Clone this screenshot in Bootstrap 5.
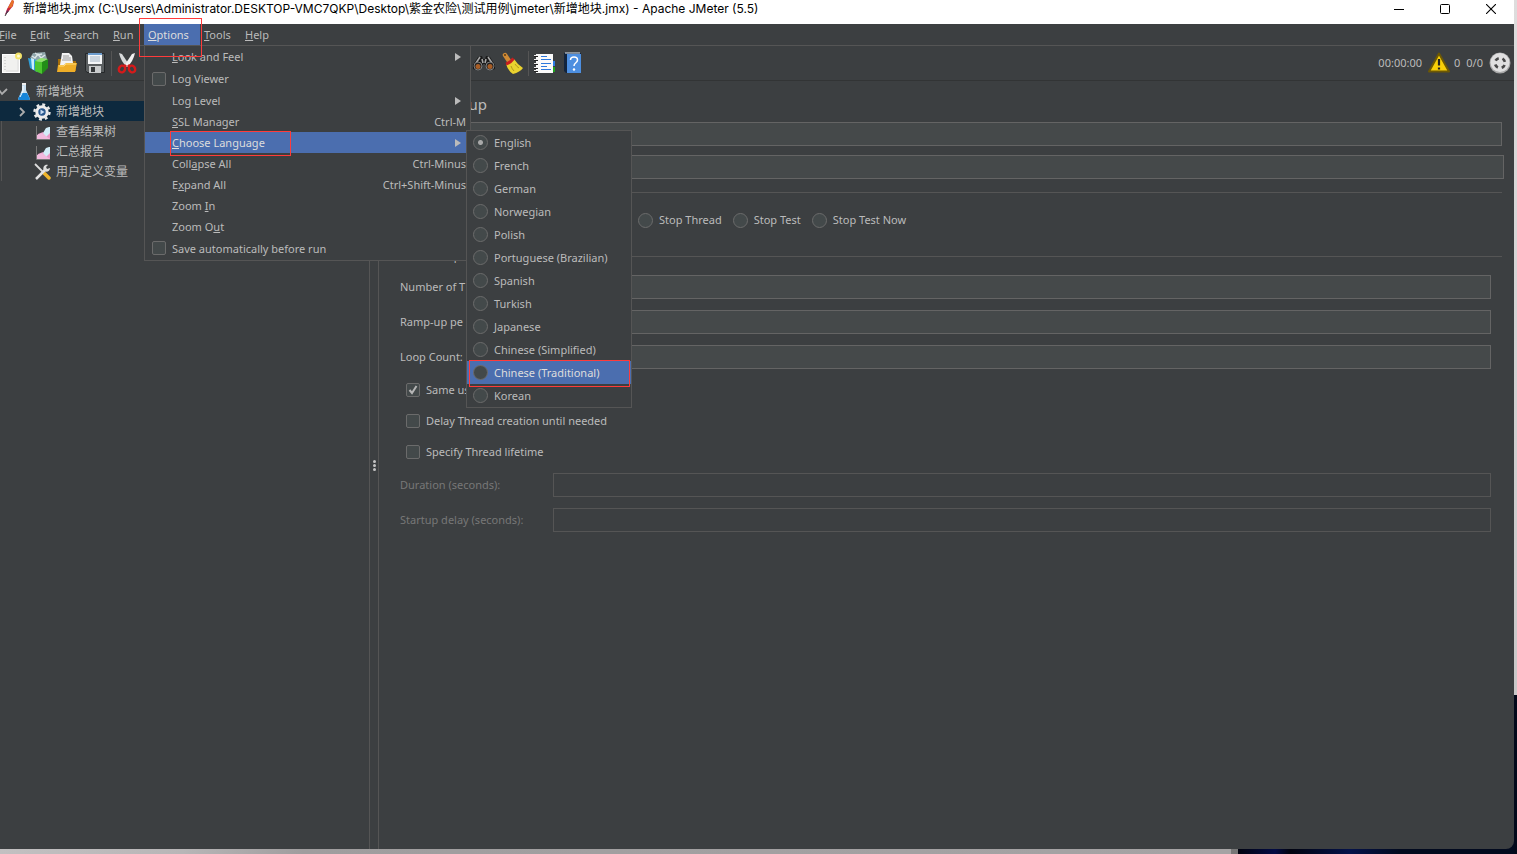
<!DOCTYPE html>
<html lang="en">
<head>
<meta charset="utf-8">
<meta name="viewport" content="width=device-width, initial-scale=1">
<title>Apache JMeter (5.5)</title>
<link href="https://cdn.jsdelivr.net/npm/bootstrap@5.3.0/dist/css/bootstrap.min.css" rel="stylesheet">
<style>
  :root { --ink:#bbbbbb; --panel:#3c3f41; --field:#45494a; --edge:#646464; --rule:#555555; --pick:#4b6eaf; --mark:#ff3b3b; }
  body { font-family:"Noto Sans","Noto Sans CJK SC",sans-serif; font-size:11px; line-height:20px; color:var(--ink);
    background:linear-gradient(90deg,#c2c0c1 0,#b8b6b7 12%,#9f9d9e 20%,#a5a3a4 80%,#a5a3a4 1231px,#777 1231px,#777 1238px,#01030f 1238px,#020b45 1275px,#01030f 1290px,#04124a 1350px,#020a1e 1400px); }
  .desk { min-height:100vh; padding:0 3px 5px 0; background:linear-gradient(180deg,#dedddd 0,#c9c8c8 695px,#02091a 695px) right top/3px 100% no-repeat; }
  .win { min-height:calc(100vh - 5px); background:var(--panel); border-bottom-right-radius:8px; }
  button { font:inherit; color:inherit; background:none; border:0; padding:0; }
  .titlebar { height:24px; background:#fff; color:#000; font-size:12px; }
  .title-text { margin-left:5px; line-height:18px; height:24px; font-family:Inter,"Noto Sans CJK SC",sans-serif; }
  .win-btn { width:46px; height:17px; }
  .menubar { height:22px; border-bottom:1px solid var(--rule); margin-left:-5px; }
  .menu-top { height:21px; padding-left:4px; text-align:left; white-space:nowrap; }
  .w-file { width:31px; } .w-edit { width:34px; } .w-search { width:49px; } .w-run { width:35px; } .w-options { width:56px; } .w-tools { width:41px; }
  .chosen { background:var(--pick) !important; color:#ddd; }
  .outlined { position:absolute; border:1px solid var(--mark); pointer-events:none; z-index:30; }
  .o-options { left:-5px; top:-6px; width:63px; height:39px; }
  .o-language { left:25px; top:-1px; width:121px; height:25px; }
  .o-chinese { left:2px; top:-1px; width:161px; height:27px; }
  .menu-pop { position:absolute; background:var(--panel); border:1px solid var(--rule); z-index:10; color:var(--ink); }
  .pop-options { left:0; top:21px; width:327px; border-top:0; margin-top:1px; }
  .pop-lang { left:321px; top:-2px; width:166px; z-index:20; }
  .item { position:relative; height:21px; padding:1px 4px 0 27px; width:100%; text-align:left; }
  .item.tall { height:22px; padding-top:0; } .item.last { height:23px; }
  .item .form-tick { position:absolute; left:7px; top:4px; }
  .arrow { width:0; height:0; border:4px solid transparent; border-left:6px solid var(--ink); border-right:0; margin-right:5px; }
  .lang { position:relative; height:23px; padding-left:6px; gap:6px; }
  .form-tick, .form-dot { appearance:none; flex:none; margin:0; width:14px; height:14px; border:1px solid #6b6b6b; border-radius:2px; background:#43494a; }
  .form-dot { width:15px; height:15px; border-radius:50%; }
  .form-dot:checked { background:radial-gradient(circle,#a9a9a9 0 2px,#43494a 3px); }
  .form-tick:checked { background:#43494a url("data:image/svg+xml,%3Csvg xmlns='http://www.w3.org/2000/svg' viewBox='0 0 12 12'%3E%3Cpath d='M2.5 6l2.5 3 4.500-7' fill='none' stroke='%23b5b5b5' stroke-width='2'/%3E%3C/svg%3E") center/12px no-repeat; }
  .toolbar { height:35px; border-bottom:1px solid #323435; margin-left:-3px; }
  .tool { width:28px; height:34px; }
  .toolbar svg, .tree svg { display:block; flex:none; }
  .tool svg { margin:auto; }
  .sep { width:1px; height:25px; background:var(--rule); margin:0 1px 0 2px; }
  .tools-late { margin-left:329px; }
  .status { gap:6px; padding-right:3px; }
  .status .alerts { gap:4px; }
  .tree { width:369px; flex:none; font-size:12px; }
  .node { height:20px; gap:5px; padding-top:2px; }
  .branch { border-left:1px solid var(--rule); margin-left:1px; }
  .branch .node { padding-left:33px; margin-left:-2px; }
  .branch .node.on { background:#0d293e; padding-left:16px; gap:5px; }
  .split { width:10px; flex:none; gap:1px; border:solid var(--rule); border-width:0 1px; }
  .grip { width:3px; height:3px; border-radius:50%; background:#c4c4c4; }
  .editor { padding:11px 12px 0 10px; min-width:0; }
  .heading { font-size:15px; line-height:24px; margin:0 0 6px; font-weight:400; }
  .entry { width:100%; height:24px; color:var(--ink); background:var(--field); border:1px solid var(--edge); border-radius:0; padding:2px 6px 0; min-width:0; }
  .entry:disabled { background:var(--panel); border-color:var(--rule); }
  .top-field { padding-left:77px; margin-bottom:9px; }
  .top-field.wide { margin-right:-2px; margin-bottom:4px; }
  .group-line { height:18px; line-height:18px; gap:4px; }
  .group-line::before { content:""; width:4px; height:1px; background:var(--rule); }
  .group-line::after { content:""; flex:1; height:1px; background:var(--rule); }
  .choices { height:46px; padding:0 0 8px 249px; gap:11px; }
  .choices label { gap:6px; }
  .threads { padding:10px 11px 0 11px; }
  .prop { margin-bottom:11px; height:24px; }
  .prop label { width:153px; flex:none; white-space:nowrap; }
  .prop.off label { color:#777; }
  .tick-row { height:31px; padding-left:6px; gap:6px; }
  .ticks { margin-top:-6px; margin-bottom:6px; }
</style>
</head>
<body>
<div class="desk">
<div class="win d-flex flex-column">
  <header class="titlebar d-flex align-items-start">
    <svg width="18" height="18" viewBox="0 0 18 18" aria-hidden="true"><path d="M5 15l2-6 5-9 2 1-1 5-5 6z" fill="#c7283c"/><path d="M8 8l4-8 2 1-2 6z" fill="#e77428"/><path d="M5 15l2-5 2 1z" fill="#7d2168"/><path d="M5 16l3-5" stroke="#444"/></svg>
    <div class="title-text flex-grow-1 text-nowrap overflow-hidden">新增地块.jmx (C:\Users\Administrator.DESKTOP-VMC7QKP\Desktop\紫金农险\测试用例\jmeter\新增地块.jmx) - Apache JMeter (5.5)</div>
    <button class="win-btn d-flex justify-content-center align-items-center" aria-label="Minimize"><svg width="10" height="10"><path d="M0 5.500h10" stroke="#000"/></svg></button>
    <button class="win-btn d-flex justify-content-center align-items-center" aria-label="Maximize"><svg width="10" height="10"><rect x=".5" y=".5" width="9" height="9" rx="1" fill="none" stroke="#000"/></svg></button>
    <button class="win-btn d-flex justify-content-center align-items-center" aria-label="Close"><svg width="10" height="10"><path d="M0 0l10 10M10 0L0 10" stroke="#000" stroke-width="1.100"/></svg></button>
  </header>

  <nav class="menubar d-flex">
    <button class="menu-top w-file"><u>F</u>ile</button>
    <button class="menu-top w-edit"><u>E</u>dit</button>
    <button class="menu-top w-search"><u>S</u>earch</button>
    <button class="menu-top w-run"><u>R</u>un</button>
    <div class="position-relative w-options">
      <button class="menu-top chosen w-100"><u>O</u>ptions</button>
      <span class="outlined o-options"></span>
      <div class="menu-pop pop-options">
        <button class="item tall d-flex align-items-center justify-content-between"><span><u>L</u>ook and Feel</span><i class="arrow"></i></button>
        <label class="item tall d-flex align-items-center"><input class="form-tick" type="checkbox">Log Viewer</label>
        <button class="item d-flex align-items-center justify-content-between"><span>Log Level</span><i class="arrow"></i></button>
        <button class="item d-flex align-items-center justify-content-between"><span><u>S</u>SL Manager</span><span>Ctrl-M</span></button>
        <div class="position-relative">
          <button class="item chosen d-flex align-items-center justify-content-between"><span><u>C</u>hoose Language</span><i class="arrow"></i></button>
          <span class="outlined o-language"></span>
          <div class="menu-pop pop-lang">
            <label class="lang d-flex align-items-center"><input class="form-dot" type="radio" name="lang" checked>English</label>
            <label class="lang d-flex align-items-center"><input class="form-dot" type="radio" name="lang">French</label>
            <label class="lang d-flex align-items-center"><input class="form-dot" type="radio" name="lang">German</label>
            <label class="lang d-flex align-items-center"><input class="form-dot" type="radio" name="lang">Norwegian</label>
            <label class="lang d-flex align-items-center"><input class="form-dot" type="radio" name="lang">Polish</label>
            <label class="lang d-flex align-items-center"><input class="form-dot" type="radio" name="lang">Portuguese (Brazilian)</label>
            <label class="lang d-flex align-items-center"><input class="form-dot" type="radio" name="lang">Spanish</label>
            <label class="lang d-flex align-items-center"><input class="form-dot" type="radio" name="lang">Turkish</label>
            <label class="lang d-flex align-items-center"><input class="form-dot" type="radio" name="lang">Japanese</label>
            <label class="lang d-flex align-items-center"><input class="form-dot" type="radio" name="lang">Chinese (Simplified)</label>
            <label class="lang chosen d-flex align-items-center"><input class="form-dot" type="radio" name="lang">Chinese (Traditional)<span class="outlined o-chinese"></span></label>
            <label class="lang d-flex align-items-center"><input class="form-dot" type="radio" name="lang">Korean</label>
          </div>
        </div>
        <button class="item d-flex align-items-center justify-content-between"><span>Coll<u>a</u>pse All</span><span>Ctrl-Minus</span></button>
        <button class="item d-flex align-items-center justify-content-between"><span>E<u>x</u>pand All</span><span>Ctrl+Shift-Minus</span></button>
        <button class="item d-flex align-items-center"><span>Zoom <u>I</u>n</span></button>
        <button class="item d-flex align-items-center"><span>Zoom O<u>u</u>t</span></button>
        <label class="item last d-flex align-items-center"><input class="form-tick" type="checkbox">Save automatically before run</label>
      </div>
    </div>
    <button class="menu-top w-tools"><u>T</u>ools</button>
    <button class="menu-top"><u>H</u>elp</button>
  </nav>

  <div class="toolbar d-flex align-items-center">
    <button class="tool" aria-label="New"><svg width="22" height="22" viewBox="0 0 22 22"><rect x="2.500" y="2.500" width="17" height="18" fill="#f1f1ef" stroke="#fff"/><path d="M5 5v14" stroke="#bbb" stroke-dasharray="1 2"/><path d="M6 19h12V8" fill="none" stroke="#ddd"/><circle cx="18.500" cy="4" r="3.500" fill="#f2e26a"/><circle cx="18.500" cy="4" r="1.500" fill="#fffbd0"/></svg></button>
    <button class="tool" aria-label="Templates"><svg width="22" height="22" viewBox="0 0 22 22"><path d="M2 6l3-5 12-1 2 7-9 5z" fill="#8fa5aa"/><path d="M4 4l3 2 3-4 3 4 4-3M7 1l3 2 4-1" fill="none" stroke="#dde6e8" stroke-width="1.300"/><path d="M0 6l9 2v12l-7-4z" fill="#2f9ed8"/><path d="M3 6l3 1v11l-2-1z" fill="#c9edfb"/><path d="M7 9l7 1v12l-7-3z" fill="#4cc52f"/><path d="M14 10l6-3v9l-6 6z" fill="#228d17"/><path d="M7 9l6-3 7 1-6 3z" fill="#8ee36a"/></svg></button>
    <button class="tool" aria-label="Open"><svg width="22" height="22" viewBox="0 0 22 22"><path d="M2 7h5l1 2h12v10H2z" fill="#a56d0b"/><path d="M6 1h7l3 3 1 7-2 2H4z" fill="#f3f3f3"/><path d="M7 4h6M7 6h8M6 8h9" stroke="#9a9a9a"/><path d="M1 20l1-7h6l2-2h11l-2 9z" fill="#efae28"/><path d="M3 14h5l2-2h10" fill="none" stroke="#ffdc74"/></svg></button>
    <button class="tool" aria-label="Save"><svg width="22" height="22" viewBox="0 0 22 22"><path d="M1.500 1.500h19v19H3l-1.500-2z" fill="#5b5f61" stroke="#25282a"/><rect x="4" y="1" width="14" height="11" fill="#f4f6f8"/><path d="M4 1h14v2H4z" fill="#6d9dce"/><path d="M6 5h10M6 7h10M6 9h10" stroke="#a4b4c4"/><rect x="5" y="14" width="12" height="7" fill="#c9cccd"/><rect x="7" y="15" width="4" height="5" fill="#35383a"/></svg></button>
    <span class="sep"></span>
    <button class="tool" aria-label="Cut"><svg width="22" height="22" viewBox="0 0 22 22"><path d="M3 1l3 1 8 12-3 1q-6-5-8-14z" fill="#d7d9da"/><path d="M19 1l-3 1-8 12 3 1q6-5 8-14z" fill="#f0f0f0"/><path d="M10 13l-2 2M12 13l2 2" stroke="#d51a1a" stroke-width="3"/><ellipse cx="6" cy="17" rx="3" ry="3.500" fill="none" stroke="#d51a1a" stroke-width="2.400" transform="rotate(35 6 17)"/><ellipse cx="16" cy="17" rx="3" ry="3.500" fill="none" stroke="#d51a1a" stroke-width="2.400" transform="rotate(-35 16 17)"/></svg></button>
    <div class="tools-late d-flex align-items-center">
      <button class="tool" aria-label="Search"><svg width="22" height="22" viewBox="0 0 22 22"><path d="M5 5l4-1 1 3h2l1-3 4 1 5 8v4l-3 1-5-1-2-5h-2l-2 5-5 1-3-1v-4z" fill="#181818"/><path d="M7 5L3 11M15 5l4 6M9 7l1 4M13 7l-1 4" stroke="#a6a6a6" stroke-width="1.600"/><circle cx="5" cy="14" r="4" fill="#222" stroke="#7d7d7d"/><circle cx="17" cy="14" r="4" fill="#222" stroke="#7d7d7d"/><circle cx="5" cy="14.500" r="2.500" fill="#a85d25"/><circle cx="17" cy="14.500" r="2.500" fill="#a85d25"/></svg></button>
      <button class="tool" aria-label="Clear all"><svg width="22" height="22" viewBox="0 0 22 22"><path d="M4 3l4 6" stroke="#cf8a35" stroke-width="4.500" stroke-linecap="round"/><circle cx="4" cy="3" r="1" fill="#5b3a14"/><path d="M5 12l8-5q3 5 9 9-3 4-10 6-5-3-7-10z" fill="#ead22f"/><path d="M10 14q1 3 3 5M14 12q2 3 4 4" stroke="#b39a1b" fill="none"/><path d="M5 12Q9 11 12.500 6.500" stroke="#c81e1e" stroke-width="3" fill="none"/></svg></button>
      <span class="sep"></span>
      <button class="tool" aria-label="Function helper"><svg width="22" height="22" viewBox="0 0 22 22"><rect x="17" y="9" width="5" height="5" fill="#2c7be5"/><rect x="17" y="15" width="5" height="5" fill="#1fa31f"/><rect x="3" y="2" width="17" height="19" fill="#fafafa"/><path d="M8 4.500h6M8 7.500h10M8 11.500h10M8 14.500h6M8 17.500h10" stroke="#2d78dc"/><path d="M1 4.500h4M1 8.500h4M1 12.500h4M1 16.500h4M1 19.500h4" stroke="#222"/><path d="M1 3.500h4M1 7.500h4M1 11.500h4M1 15.500h4M1 18.500h4" stroke="#eee"/></svg></button>
      <button class="tool" aria-label="Help"><svg width="22" height="22" viewBox="0 0 22 22"><path d="M3 1h17v20H5l-2-2z" fill="#12243d"/><path d="M6 2h14v19H6z" fill="#4d8fe0"/><path d="M4 1h15" stroke="#dce8f5"/><path d="M9.500 8c0-4 7-4 7 0 0 3-3.500 2.500-3.500 6" fill="none" stroke="#fff" stroke-width="1.500"/><circle cx="13" cy="17.500" r="1.200" fill="#fff"/></svg></button>
    </div>
    <div class="status ms-auto d-flex align-items-center">
      <span>00:00:00</span>
      <span class="alerts d-flex align-items-center"><svg width="22" height="22" viewBox="0 0 22 22" aria-hidden="true"><path d="M11 1.500L21 19.500H1z" fill="#f8cf08" stroke="#6d5804" stroke-width="2" stroke-linejoin="round"/><path d="M11 7v6.500M11 15.500v2" stroke="#222" stroke-width="2.200"/></svg>0</span>
      <span>0/0</span>
      <svg width="22" height="22" viewBox="0 0 22 22" aria-hidden="true"><circle cx="11" cy="11" r="10.500" fill="#a8a8a8"/><circle cx="11" cy="10.500" r="9.500" fill="#e0e0e0"/><circle cx="11" cy="11" r="5" fill="none" stroke="#484848" stroke-width="2.600" stroke-dasharray="3.900 3.954" stroke-dashoffset="-2"/></svg>
    </div>
  </div>

  <main class="d-flex flex-grow-1">
    <aside class="tree">
      <div class="node d-flex align-items-center">
        <svg width="8" height="8" viewBox="0 0 8 8"><path d="M-1 2l3 4 5-5" fill="none" stroke="#adadad" stroke-width="1.800"/></svg>
        <svg class="ms-1" width="14" height="18" viewBox="0 0 14 18"><path d="M5 2h4v5l4 9-1 1H2l-1-1 4-9z" fill="#c7dff1"/><path d="M4 10h6l3 6-1 1H2l-1-1z" fill="#1685d9"/><path d="M5 1h4" stroke="#eee" stroke-width="2"/><path d="M6 3v5l-3 6" stroke="#fff" fill="none"/></svg>
        <span>新增地块</span>
      </div>
      <div class="branch">
        <div class="node on d-flex align-items-center">
          <svg width="12" height="12" viewBox="0 0 12 12"><path d="M4 2l4 4-4 4" fill="none" stroke="#adadad" stroke-width="1.800"/></svg>
          <svg width="18" height="18" viewBox="0 0 18 18"><circle cx="9" cy="9" r="7.500" fill="none" stroke="#e8e8e8" stroke-width="2.400" stroke-dasharray="2.900 2.990"/><circle cx="9" cy="9" r="5.200" fill="#27568c" stroke="#ececec" stroke-width="3"/><path d="M7.500 6.500l4 2.500-4 2.500z" fill="#c8dcf1"/></svg>
          <span>新增地块</span>
        </div>
        <div class="node d-flex align-items-center">
          <svg width="18" height="18" viewBox="0 0 18 18"><path d="M4 16l1-5 5-2 3 3 4-4v8z" fill="#e79bc8"/><path d="M10 10l3-5 3-1h1v6l-4 4z" fill="#d3edf8"/><path d="M4 12l5-2 8 6H4z" fill="#f2bade"/><path d="M3.500 3v13.500H17" stroke="#777" fill="none"/></svg>
          <span>查看结果树</span>
        </div>
        <div class="node d-flex align-items-center">
          <svg width="18" height="18" viewBox="0 0 18 18"><path d="M4 16l1-5 5-2 3 3 4-4v8z" fill="#e79bc8"/><path d="M10 10l3-5 3-1h1v6l-4 4z" fill="#d3edf8"/><path d="M4 12l5-2 8 6H4z" fill="#f2bade"/><path d="M3.500 3v13.500H17" stroke="#777" fill="none"/></svg>
          <span>汇总报告</span>
        </div>
        <div class="node d-flex align-items-center">
          <svg width="18" height="18" viewBox="0 0 18 18"><path d="M2 1l9 9" stroke="#ddd" stroke-width="1.800"/><path d="M11 10l5 5" stroke="#efb52c" stroke-width="3.500" stroke-linecap="round"/><path d="M3 16L12 7" stroke="#e2e2e2" stroke-width="2.500"/><path d="M11 8c-2-4 1-7 4-6l-2 2 1 2 3-1c0 3-3 5-6 3z" fill="#ddd"/></svg>
          <span>用户定义变量</span>
        </div>
      </div>
    </aside>
    <div class="split d-flex flex-column align-items-center justify-content-center" role="separator">
      <i class="grip"></i><i class="grip"></i><i class="grip"></i>
    </div>
    <section class="editor flex-grow-1">
      <h1 class="heading">Thread Group</h1>
      <div class="top-field"><input class="entry d-block" aria-label="Name" value="新增地块"></div>
      <div class="top-field wide"><input class="entry d-block" aria-label="Comments"></div>
      <div class="group-line d-flex align-items-center"></div>
      <div class="choices d-flex align-items-center">
        <label class="d-flex align-items-center"><input class="form-dot" type="radio" name="onerr">Stop Thread</label>
        <label class="d-flex align-items-center"><input class="form-dot" type="radio" name="onerr">Stop Test</label>
        <label class="d-flex align-items-center"><input class="form-dot" type="radio" name="onerr">Stop Test Now</label>
      </div>
      <div class="group-line d-flex align-items-center">Thread Properties</div>
      <div class="threads">
        <div class="prop d-flex align-items-center"><label for="users">Number of T</label><input class="entry" id="users"></div>
        <div class="prop d-flex align-items-center"><label for="ramp">Ramp-up pe</label><input class="entry" id="ramp"></div>
        <div class="prop d-flex align-items-center"><label for="loops">Loop Count:</label><input class="entry" id="loops"></div>
        <div class="ticks">
          <label class="tick-row d-flex align-items-center"><input class="form-tick" type="checkbox" checked>Same us</label>
          <label class="tick-row d-flex align-items-center"><input class="form-tick" type="checkbox">Delay Thread creation until needed</label>
          <label class="tick-row d-flex align-items-center"><input class="form-tick" type="checkbox">Specify Thread lifetime</label>
        </div>
        <div class="prop off d-flex align-items-center"><label for="duration">Duration (seconds):</label><input class="entry" id="duration" disabled></div>
        <div class="prop off d-flex align-items-center"><label for="delay">Startup delay (seconds):</label><input class="entry" id="delay" disabled></div>
      </div>
    </section>
  </main>
</div>
</div>
<script src="https://cdn.jsdelivr.net/npm/bootstrap@5.3.0/dist/js/bootstrap.bundle.min.js"></script>
</body>
</html>
